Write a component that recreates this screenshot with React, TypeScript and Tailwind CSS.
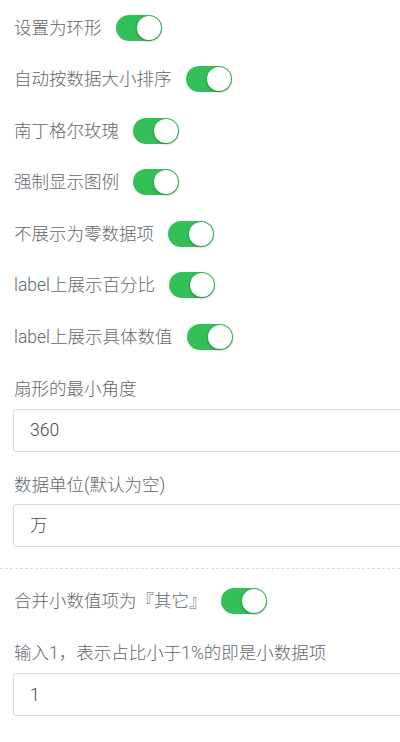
import React from "react";

const font = { fontFamily: "Roboto,'Noto Sans CJK SC',sans-serif" };

function Toggle() {
  return (
    <div className="relative ml-[14px] h-[26px] w-[46px] shrink-0 rounded-full bg-[#34c058]">
      <div className="absolute right-px top-px h-[24px] w-[24px] rounded-full bg-white shadow-[0_1px_3px_rgba(0,0,0,0.35)]" />
    </div>
  );
}

function Row({ label }: { label: string }) {
  return (
    <div className="flex h-[51.5px] items-center">
      <span className="whitespace-nowrap">{label}</span>
      <Toggle />
    </div>
  );
}

function Input({ value, className }: { value: string; className?: string }) {
  return (
    <div
      className={`-ml-px flex h-[43px] w-[400px] items-center rounded-[3px] border border-[#d3dcdf] bg-white pl-[16px] text-[17.5px] text-[#48494b] ${className ?? ""}`}
    >
      {value}
    </div>
  );
}

export default function App() {
  const rows = [
    "设置为环形",
    "自动按数据大小排序",
    "南丁格尔玫瑰",
    "强制显示图例",
    "不展示为零数据项",
    "label上展示百分比",
    "label上展示具体数值",
  ];
  return (
    <div
      className="h-[742px] w-[400px] overflow-hidden bg-white text-[17.5px] font-light leading-[24px] text-[#62676c]"
      style={font}
    >
      <div className="pl-[14px] pt-[2px]">
        {rows.map((r) => (
          <Row key={r} label={r} />
        ))}
        <div className="mt-[14px]">扇形的最小角度</div>
        <Input value="360" className="mt-[8px]" />
        <div className="mt-[21px]">数据单位(默认为空)</div>
        <Input value="万" className="mt-[7px]" />
      </div>
      <div className="mt-[21px] border-t border-dashed border-[#dcdcdc]" />
      <div className="pl-[14px] pt-[7px]">
        <Row label="合并小数值项为『其它』" />
        <div className="mt-[14px]">输入1，表示占比小于1%的即是小数据项</div>
        <Input value="1" className="mt-[8px] h-[42px]" />
      </div>
    </div>
  );
}
